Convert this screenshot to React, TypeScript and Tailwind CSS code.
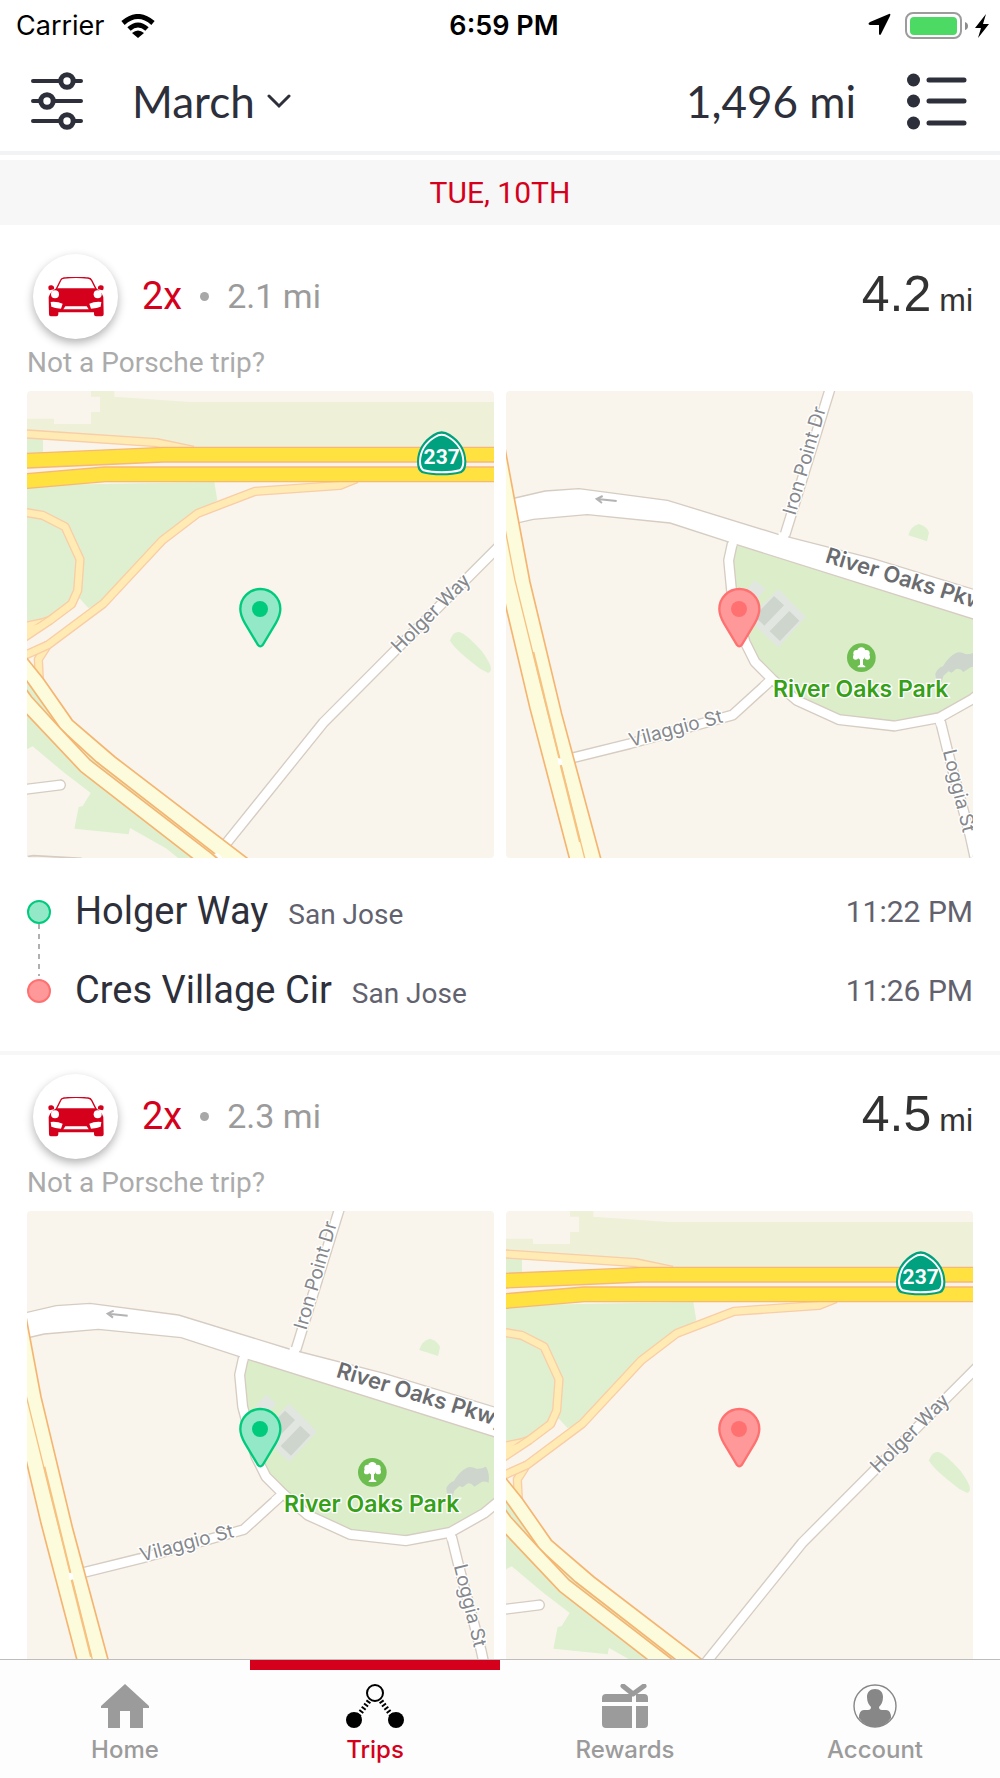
import type { ReactNode } from 'react'

type Tone = 'start' | 'end'
type MapName = 'highway' | 'park'

interface Stop {
  street: string
  city: string
  time?: string
  map: MapName
}

interface Trip {
  id: number
  multiplier: string
  distance: string
  total: string
  start: Stop
  end: Stop
}

const TRIPS: Trip[] = [
  {
    id: 1,
    multiplier: '2x',
    distance: '2.1 mi',
    total: '4.2',
    start: { street: 'Holger Way', city: 'San Jose', time: '11:22 PM', map: 'highway' },
    end: { street: 'Cres Village Cir', city: 'San Jose', time: '11:26 PM', map: 'park' },
  },
  {
    id: 2,
    multiplier: '2x',
    distance: '2.3 mi',
    total: '4.5',
    start: { street: 'Cres Village Cir', city: 'San Jose', map: 'park' },
    end: { street: 'Holger Way', city: 'San Jose', map: 'highway' },
  },
]

const PIN_COLORS: Record<Tone, { line: string; fill: string }> = {
  start: { line: '#00cb7d', fill: '#93e8c7' },
  end: { line: '#ff7171', fill: '#ff9999' },
}

/* ---------- maps ---------- */

interface RoadProps {
  points: string
  width?: number
  casing?: string
  fill?: string
}

function Road({ points, width = 26, casing = '#d6ccc2', fill = '#ffffff' }: RoadProps) {
  return (
    <g fill="none" strokeLinejoin="round">
      <polyline points={points} stroke={casing} strokeWidth={width + 8} />
      <polyline points={points} stroke={fill} strokeWidth={width} />
    </g>
  )
}

function Pin({ tone }: { tone: Tone }) {
  const { line, fill } = PIN_COLORS[tone]
  return (
    <g>
      <path
        d="M661 671a60 60 0 1 1 120 0c0 17-7 31-14 43l-39 65q-7 8-14 0l-39-65c-7-12-14-26-14-43z"
        fill={fill}
        stroke={line}
        strokeWidth="7"
      />
      <circle cx="720" cy="671" r="24" fill={line} />
    </g>
  )
}

function HighwayMap({ tone }: { tone: Tone }) {
  const ramp = { width: 20, casing: '#f9cda6', fill: '#ffebb3' }
  const highway = { width: 40, casing: '#f6b877', fill: '#ffe13f' }
  return (
    <svg viewBox="21 17 1401 1401" className="block aspect-square w-full rounded bg-[#f9f5ed]">
      {/* Parks */}
      <path d="M213 17H283V34L510 50H1423V190H21V100H102V116H213V80H240V34H213Z" fill="#eef0d8" />
      <path d="M21 158L69 161V205L21 207Z" fill="#dff0d1" />
      <path d="M69 161L400 178L440 190L69 205Z" fill="#f9f5ed" />
      <path d="M21 300L583 290L592 345L427 465L250 655L205 668L180 640L150 660L90 705L21 720Z" fill="#dff0d1" />
      <path
        d="M21 880L140 1040L340 1210L600 1419H475L440 1390L330 1328L326 1347L163 1330L176 1265L188 1262L212 1223L130 1160L38 1083L21 1092Z"
        fill="#dff0d1"
      />
      <path
        d="M1290 765Q1300 737 1318 740Q1338 745 1385 797Q1415 838 1413 852Q1410 865 1403 862L1380 850Q1300 790 1290 765Z"
        fill="#dff0d1"
      />

      {/* Ramps */}
      <Road points="10,724 68,712 92,704" {...ramp} />
      <Road points="0,381 21,382 68,390 135,424 180,522 173,616 155,656 90,705 10,758" {...ramp} />
      <path d="M21 726L92 706L21 750Z" fill="#ffebb3" />
      <Road points="85,775 55,822 59,900" {...ramp} />
      <Road points="1010,280 960,300 705,318 533,384 427,465 250,655 85,778 10,812" {...ramp} />
      <Road points="0,145 21,146 410,172 520,195" {...ramp} />

      {/* Route 237 */}
      <path d="M21 235L430 228H1423V246H255L21 270Z" fill="#f9f2ea" />
      <Road points="0,227 21,226 430,208 1440,208" {...highway} />
      <Road points="0,289 21,287 255,267 1440,267" {...highway} />

      {/* Streets */}
      <Road points="1460,459 1423,497 910,1012 610,1385" />
      <g fill="none" strokeLinecap="round">
        <path d="M0 1214L121 1199" stroke="#d6ccc2" strokeWidth="34" />
        <path d="M0 1214L121 1199" stroke="#fff" strokeWidth="26" />
      </g>
      <path d="M21 1414L40 1411L185 1419" stroke="#d6ccc2" strokeWidth="5" fill="none" />

      {/* Freeway, one shape for each direction */}
      <g fill="#fcfbdb" stroke="#f5b571" strokeWidth="5">
        <path d="M10 806L70 880L157 1005L285 1115L690 1425H605L583 1404L230 1130L140 1048L120 1028L10 872Z" />
        <path d="M10 900L35 935L120 1028L210 1124L575 1405L598 1425H526L182 1158L10 976Z" />
      </g>
      <path d="M582 1406L592 1403L606 1414V1419H596Z" fill="#fff" />

      {/* Route shield */}
      <path
        d="M1240 146Q1265 129 1290 146C1322 166 1338 195 1339 228Q1340 256 1325 263Q1300 270 1265 270Q1230 270 1205 263Q1190 256 1191 228C1192 195 1208 166 1240 146Z"
        fill="#00a17f"
      />
      <path
        d="M1245 155Q1265 142 1285 155C1313 172 1329 198 1330 228Q1330 249 1319 255Q1298 261 1265 261Q1232 261 1211 255Q1200 249 1200 228C1201 198 1217 172 1245 155Z"
        fill="none"
        stroke="#fff"
        strokeWidth="6"
      />
      <text x="1265" y="237" textAnchor="middle" fontSize="63" fill="#fff" className="font-[Roboto,sans-serif] font-bold">
        237
      </text>

      <text
        transform="translate(1138 806) rotate(-45)"
        fontSize="60"
        fill="#86888b"
        stroke="#fff"
        strokeWidth="8"
        paintOrder="stroke"
        className="font-[Roboto,sans-serif]"
      >
        Holger Way
      </text>
      <Pin tone={tone} />
    </svg>
  )
}

function ParkMap({ tone }: { tone: Tone }) {
  // The camera sits slightly to the south-east when the trip starts here
  const dx = tone === 'start' ? -27 : 3
  const dy = tone === 'start' ? -16 : 0
  return (
    <svg viewBox="21 17 1401 1401" className="block aspect-square w-full rounded bg-[#f9f5ed]">
      <g transform={`translate(${dx} ${dy})`}>
        <path d="M1225 450Q1232 422 1257 416Q1282 424 1287 442L1281 468Z" fill="#dff0d1" />
        <path
          d="M705 470L1470 700V900L1419 935L1315 992L1183 1018L1020 1000L895 945L780 850L700 620L690 520Z"
          fill="#dcedca"
        />

        {/* Courts and pond */}
        <path
          d="M835 618L911 695L835 779L751 700Z M765 592L790 612L762 644L740 620Z"
          fill="#e1e6e0"
          stroke="#e1e6e0"
          strokeWidth="10"
          strokeLinejoin="round"
        />
        <path d="M822 632L852 660L793 721L763 693Z M868 677L898 706L840 767L809 738Z" fill="#ced5cc" />
        <path
          d="M1309 892L1306 865Q1313 848 1329 843Q1345 814 1368 803Q1380 798 1396 806Q1410 808 1425 800Q1437 820 1433 848Q1420 842 1412 846L1390 860Q1380 847 1368 851L1355 862L1345 858L1330 872L1325 890Z"
          fill="#ced5cd"
        />

        {/* Streets */}
        <Road points="995,-5 850,465" />
        <Road points="200,1122 390,1075 698,989 820,878" />
        <Road points="1318,995 1345,1105 1410,1350 1432,1450" />
        <Road points="700,460 686,525 695,620 735,770 765,830 815,880 890,945 1017,1003 1184,1022 1318,997 1419,940 1480,890" />
        <polyline points="790,904 815,882" stroke="#fff" strokeWidth="26" />
        <polyline points="1314,988 1323,1020" stroke="#fff" strokeWidth="26" />
        <path
          d="M0 348L45 338L135 317L237 310L503 345L835 447L1120 520L1480 630V720L710 478L510 413L262 388L100 402L0 425Z"
          fill="#fff"
          stroke="#d6ccc2"
          strokeWidth="4"
        />
        <path d="M838 440L866 448L860 470L832 462Z M690 455L714 462L708 486L684 480Z" fill="#fff" />
        <path d="M350 347L292 341M308 332L290 341L306 353" stroke="#b3b3b3" strokeWidth="6" fill="none" />

        {/* Freeway */}
        <path
          d="M-10 50L19 210L45 350L90 590L185 985L305 1430H211L90 970L19 670L-10 540Z"
          fill="#fcfbdb"
          stroke="#f5b571"
          strokeWidth="5"
        />
        <g fill="none" stroke="#f7c180">
          <path d="M5 380L19 450L45 585L120 890L180 1125L257 1430" strokeWidth="4" />
          <path d="M100 800L178 1118" strokeWidth="6" />
          <path d="M182 1140L240 1370" strokeWidth="6" />
        </g>
        <path d="M172 1118L184 1120L188 1138L176 1140Z" fill="#fff" />

        {/* Labels */}
        <g
          fill="#86888b"
          stroke="#fff"
          strokeWidth="8"
          paintOrder="stroke"
          fontSize="57"
          className="font-[Inter,sans-serif]"
        >
          <text transform="translate(886 392) rotate(-74)">Iron Point Dr</text>
          <text transform="translate(393 1085) rotate(-15)">Vilaggio St</text>
          <text transform="translate(1328 1098) rotate(76)">Loggia St</text>
          <text transform="translate(973 530) rotate(17)" fontSize="66" fill="#6a6c6f" className="font-semibold">
            River Oaks Pkwy
          </text>
          <text x="1082" y="935" textAnchor="middle" fontSize="69" fill="#36a016" className="font-semibold">
            River Oaks Park
          </text>
        </g>

        {/* Park badge */}
        <circle cx="1084" cy="817" r="43" fill="#6dbd51" />
        <g fill="#fff">
          <circle cx="1084" cy="799" r="13" />
          <circle cx="1070" cy="804" r="10" />
          <circle cx="1099" cy="804" r="10" />
          <circle cx="1067" cy="815" r="8" />
          <circle cx="1102" cy="815" r="8" />
          <circle cx="1084" cy="812" r="11" />
          <path d="M1080 815H1089V838L1096 843V846H1073V843L1080 838Z" />
        </g>
      </g>
      <Pin tone={tone} />
    </svg>
  )
}

/* ---------- icons ---------- */

function SlidersIcon() {
  return (
    <svg viewBox="0 0 52 60" className="h-15 w-13" fill="none" stroke="#2d2f3a" strokeWidth="4" strokeLinecap="round">
      <path d="M2 10H28M44 10H50M2 30H8M24 30H50M2 50H28M44 50H50" />
      <circle cx="36" cy="10" r="6.2" strokeWidth="5" />
      <circle cx="16" cy="30" r="6.2" strokeWidth="5" />
      <circle cx="36" cy="50" r="6.2" strokeWidth="5" />
    </svg>
  )
}

function ListIcon() {
  return (
    <svg viewBox="0 0 60 60" className="size-15" fill="#2d2f3a" stroke="#2d2f3a">
      <path d="M22 9H57M22 30H57M22 52H57" strokeWidth="5" strokeLinecap="round" />
      <g stroke="none">
        <circle cx="6.5" cy="9" r="6.5" />
        <circle cx="6.5" cy="30" r="6.5" />
        <circle cx="6.5" cy="52" r="6.5" />
      </g>
    </svg>
  )
}

function CarIcon() {
  return (
    <svg viewBox="0 0 168 120" className="h-10 w-14" fill="#d5001c">
      <path d="M24 38L38 10Q40 4 48 3Q84 -1 120 3Q128 4 131 10L145 38" fill="none" stroke="#d5001c" strokeWidth="4" />
      <path d="M26 34H143Q160 42 166 60L167 112Q167 118 161 118H144Q138 118 138 112V106H31V112Q31 118 25 118H8Q3 118 3 112L2 60Q8 42 26 34Z" />
      <path d="M1 32Q1 24 11 25Q20 27 18 37L5 40Q1 38 1 32Z M167 32Q167 24 157 25Q148 27 150 37L163 40Q167 38 167 32Z" />
      <g fill="#fff">
        <circle cx="21" cy="52" r="12" />
        <circle cx="149" cy="52" r="12" />
        <path d="M8 75Q28 73 44 80L39 95Q20 94 10 89Z M160 75Q140 73 124 80L129 95Q148 94 158 89Z" />
        <path d="M52 88H116L122 97H46Z" />
      </g>
    </svg>
  )
}

function HomeIcon() {
  return (
    <svg viewBox="0 0 48 44" className="h-11 w-12" fill="#9b9b9b">
      <path d="M24 0L48 22V24H42V44H29V27H19V44H7V24H0V22Z" />
    </svg>
  )
}

function TripsIcon() {
  return (
    <svg viewBox="0 0 58 44" className="h-11 w-[58px]">
      <circle cx="29" cy="9" r="8" fill="none" stroke="#000" strokeWidth="2" />
      <path d="M23 17L12 32M35 17L46 32" stroke="#000" strokeWidth="5" strokeDasharray="2 2" />
      <circle cx="8" cy="36" r="8" />
      <circle cx="50" cy="36" r="8" />
    </svg>
  )
}

function RewardsIcon() {
  return (
    <svg viewBox="0 0 46 44" className="h-11 w-[46px]" fill="#9b9b9b">
      <path d="M21 2L31 10L42 2" fill="none" stroke="#9b9b9b" strokeWidth="5" strokeLinecap="round" strokeLinejoin="round" />
      <path d="M0 18V14Q0 10 4 10H30V18Z M34 18V10H42Q46 10 46 14V18Z M0 22H30V44H4Q0 44 0 40Z M34 22H46V40Q46 44 42 44H34Z" />
    </svg>
  )
}

function AccountIcon() {
  return (
    <svg viewBox="0 0 44 44" className="size-11">
      <circle cx="22" cy="22" r="21" fill="none" stroke="#878787" strokeWidth="1.4" />
      <path
        d="M22 5C27 5 30 8 30 13C30 18 28 21 26 23Q26 26 29 26H33Q38 26 38 34Q32 43 22 43T6 34Q6 26 11 26H15Q18 26 18 23C16 21 14 18 14 13C14 8 17 5 22 5Z"
        fill="#878787"
      />
    </svg>
  )
}

/* ---------- page parts ---------- */

function StatusBar() {
  return (
    <div className="grid grid-cols-3 items-center pt-[10px] pr-2 pl-4 font-[Inter,sans-serif] text-[27px] leading-8 text-black">
      <div className="flex items-center gap-4">
        <span>Carrier</span>
        <svg viewBox="0 0 34 24" className="h-6 w-[34px]" fill="none" stroke="#000" strokeWidth="5">
          <path d="M2 9Q17 -4 32 9" />
          <path d="M8 15Q17 7 26 15" />
          <path d="M17 24L11 19Q17 14 23 19Z" fill="#000" stroke="none" />
        </svg>
      </div>
      <span className="text-center font-semibold">6:59 PM</span>
      <div className="flex items-center justify-end">
        <svg viewBox="-2 0 124 28" className="h-7 w-[124px]">
          <path d="M19 2Q21 1 20 4L11 22Q10 24 9 22V13H0Q-3 12 0 10Z" />
          <rect x="36" y="1" width="55" height="25" rx="7" fill="none" stroke="#9c9c9c" strokeWidth="2" />
          <rect x="40" y="5" width="47" height="18" rx="4" fill="#4cd964" />
          <path d="M95 10Q98 11 98 14Q98 17 95 18Z" fill="#8c8c8c" />
          <path d="M116 2L105 16H111L108 26L119 12H113Z" />
        </svg>
      </div>
    </div>
  )
}

function Header() {
  return (
    <header className="shrink-0 border-b-4 border-[#f1f3f4] bg-white">
      <StatusBar />
      <div className="flex h-[109px] items-center pt-2 pr-[33px] pl-[31px] font-[Lato,sans-serif] text-[44px] text-[#2d2f3a]">
        <button type="button" aria-label="Filter trips">
          <SlidersIcon />
        </button>
        <button type="button" className="ml-[49px] flex items-center gap-3">
          March
          <svg viewBox="0 0 24 16" className="h-4 w-6" fill="none" stroke="#2d2f3a" strokeWidth="3" strokeLinecap="round">
            <path d="M2 3L12 13L22 3" />
          </svg>
        </button>
        <span className="ml-auto">1,496 mi</span>
        <button type="button" aria-label="Show list" className="ml-[51px]">
          <ListIcon />
        </button>
      </div>
    </header>
  )
}

function StopMap({ stop, tone }: { stop: Stop; tone: Tone }) {
  return stop.map === 'highway' ? <HighwayMap tone={tone} /> : <ParkMap tone={tone} />
}

function StopRow({ stop, tone }: { stop: Stop; tone: Tone }) {
  return (
    <li className="flex h-[79px] items-center">
      <span
        className={`size-6 rounded-full border-2 ${
          tone === 'start' ? 'border-[#00cb7d] bg-[#93e8c7]' : 'border-[#ff7171] bg-[#ff9999]'
        }`}
      />
      <div className="ml-6 flex items-baseline gap-5">
        <span className="text-[38px] leading-12 text-[#2d2f3a]">{stop.street}</span>
        <span className="text-[28px] text-[#62626e]">{stop.city}</span>
      </div>
      <time className="ml-auto text-[30px] text-[#62626e]">{stop.time}</time>
    </li>
  )
}

function TripCard({ trip }: { trip: Trip }) {
  return (
    <article className="shrink-0 border-b-4 border-[#f7f7f8] px-[27px] pt-[19px] pb-[21px]">
      <div className="flex items-center">
        <div className="ml-[6px] flex size-[85px] items-center justify-center rounded-full bg-white shadow-[0_4px_10px_rgba(0,0,0,0.3)]">
          <CarIcon />
        </div>
        <span className="ml-6 text-[38px] text-[#d5001c]">{trip.multiplier}</span>
        <span className="mx-[18px] size-[9px] rounded-full bg-[#a8a8a8]" />
        <span className="text-[34px] text-[#9b9b9b]">{trip.distance}</span>
        <span className="ml-auto pb-1 font-[Liberation_Sans,sans-serif] text-[#323232]">
          <span className="text-[50px]">{trip.total}</span>
          <span className="ml-2 text-[32px]">mi</span>
        </span>
      </div>
      <a href="#" className="mt-1 block text-[28px] leading-10 text-[#ababab]">
        Not a Porsche trip?
      </a>
      <div className="mt-2 grid grid-cols-2 gap-3">
        <StopMap stop={trip.start} tone="start" />
        <StopMap stop={trip.end} tone="end" />
      </div>
      {trip.start.time && (
        <div className="relative pt-[14px]">
          <ul>
            <StopRow stop={trip.start} tone="start" />
            <StopRow stop={trip.end} tone="end" />
          </ul>
          <span className="absolute top-[66px] left-[11px] h-[52px] w-[2px] bg-[repeating-linear-gradient(#b0b0b0_0_5px,transparent_5px_10px)]" />
        </div>
      )}
    </article>
  )
}

interface TabProps {
  label: string
  icon: ReactNode
  active?: boolean
}

function Tab({ label, icon, active }: TabProps) {
  return (
    <a
      href="#"
      aria-current={active ? 'page' : undefined}
      className={`flex flex-1 flex-col items-center border-t-10 pt-[14px] pb-3 ${
        active ? 'border-[#d5001c] text-[#d5001c]' : 'border-transparent text-[#9b9b9b]'
      }`}
    >
      {icon}
      <span className="mt-[6px] text-[24px] leading-8 font-medium">{label}</span>
    </a>
  )
}

export default function App() {
  return (
    <div className="flex h-screen flex-col bg-white font-[Roboto,sans-serif]">
      <Header />
      <main className="flex min-h-0 flex-1 flex-col overflow-y-auto pt-[5px] [scrollbar-width:none]">
        <h2 className="mb-[10px] shrink-0 bg-[#f7f7f7] text-center text-[30px] leading-[65px] text-[#d5001c]">TUE, 10TH</h2>
        {TRIPS.map(trip => (
          <TripCard key={trip.id} trip={trip} />
        ))}
      </main>
      <nav className="flex shrink-0 border-t border-[#bdbdbd] bg-[#fdfdfd] font-[Inter,sans-serif]">
        <Tab label="Home" icon={<HomeIcon />} />
        <Tab label="Trips" icon={<TripsIcon />} active />
        <Tab label="Rewards" icon={<RewardsIcon />} />
        <Tab label="Account" icon={<AccountIcon />} />
      </nav>
    </div>
  )
}
